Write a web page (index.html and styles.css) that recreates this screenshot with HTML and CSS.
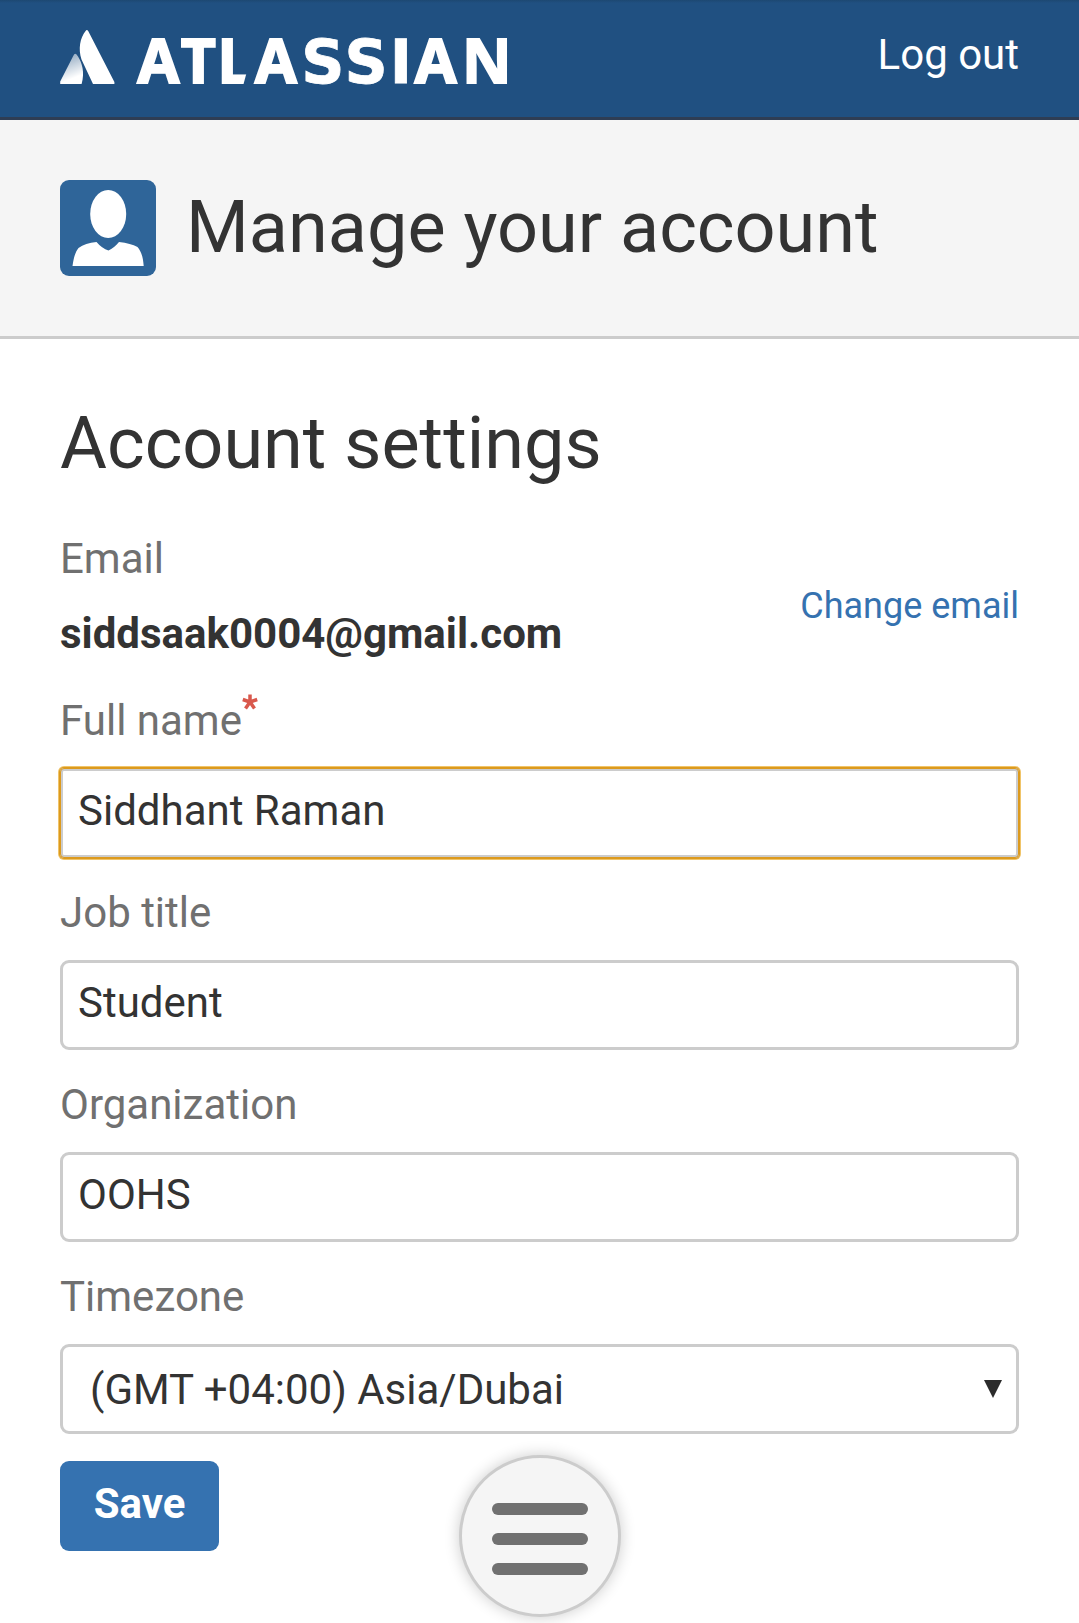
FILE: index.html
```html
<!DOCTYPE html>
<html lang="en">
<head>
<meta charset="utf-8">
<title>Manage your account</title>
<link rel="stylesheet" href="styles.css">
</head>
<body>
<header class="topbar">
  <svg class="logo" width="460" height="117" viewBox="60 0 460 117" aria-label="Atlassian">
    <defs>
      <linearGradient id="peak" x1="0.35" y1="0" x2="0.65" y2="1">
        <stop offset="0" stop-color="#fff" stop-opacity=".5"/>
        <stop offset="0.8" stop-color="#fff"/>
      </linearGradient>
    </defs>
    <path fill="url(#peak)" d="M60.200 84 V81.500 L73.200 56 Q75.300 51.500 78 56.500 C82 63 85 72 81.600 84 Z"/>
    <path fill="#fff" d="M93 84 L81.500 59.500 C78 49 80 38 85.600 31 Q86.800 29 88.200 31 L114.400 82 V84 Z"/>
    <text class="wordmark" y="83.200"><tspan x="137.200">A</tspan><tspan x="180.800">T</tspan><tspan x="217.500">L</tspan><tspan x="254.800">A</tspan><tspan class="wide" x="301.300">S</tspan><tspan class="wide" x="344.600">S</tspan><tspan class="wide" x="389.800">I</tspan><tspan x="414.600">A</tspan><tspan x="462">N</tspan></text>
    <path class="foot" d="M246.800 72 H252 V86 H243 Z"/>
  </svg>
  <a class="logout">Log out</a>
</header>
<section class="page-header">
  <svg class="avatar" width="96" height="96" viewBox="0 0 96 96">
    <rect width="96" height="96" rx="9" fill="#2f6599"/>
    <ellipse cx="48.200" cy="34" rx="18" ry="24" fill="#fff"/>
    <path fill="#fff" d="M12.500 86 C14 76 15.500 72 18.500 68 C23 64.500 29 63 36.500 62 Q42 68.500 48.500 70.500 Q54 68 59 62 C67 63 73 64.500 77.500 67 C81.500 72 83 77 83.700 86 Z"/>
  </svg>
  <h1>Manage your account</h1>
</section>
<main class="content">
  <h2>Account settings</h2>
  <div class="email-row">
    <div>
      <div class="label">Email</div>
      <div class="email">siddsaak0004@gmail.com</div>
    </div>
    <a class="change">Change email</a>
  </div>
  <div class="field">
    <label class="label" for="name">Full name<svg class="required" width="16" height="16" viewBox="0 0 16 16"><path d="M8 8 V0.500 M8 8 L0.800 5.500 M8 8 L15.200 5.500 M8 8 L3.500 14.500 M8 8 L12.500 14.500"/></svg></label>
    <input class="control focused" id="name" type="text" value="Siddhant Raman">
  </div>
  <div class="field">
    <label class="label" for="job">Job title</label>
    <input class="control" id="job" type="text" value="Student">
  </div>
  <div class="field">
    <label class="label" for="org">Organization</label>
    <input class="control" id="org" type="text" value="OOHS">
  </div>
  <div class="field">
    <label class="label" for="tz">Timezone</label>
    <div class="select">
      <select class="control" id="tz"><option>(GMT +04:00) Asia/Dubai</option></select>
      <svg class="arrow" width="18" height="18" viewBox="0 0 18 18"><path fill="#2b2b2b" d="M0 0 H18 L9 18 Z"/></svg>
    </div>
  </div>
  <button class="save" type="button">Save</button>
</main>
<button class="menu" type="button" aria-label="Menu"><span></span><span></span><span></span></button>
</body>
</html>
```
FILE: styles.css
```css
* { box-sizing: border-box; }
body {
  margin: 0;
  position: relative;
  height: 1623px;
  overflow: hidden;
  background: #fff;
  color: #333;
  font-family: Roboto, sans-serif;
  font-size: 42px;
}
h1, h2 { margin: 0; font-size: 72px; font-weight: 400; }

.topbar {
  display: flex;
  justify-content: space-between;
  align-items: flex-start;
  height: 120px;
  padding: 0 60px;
  background: linear-gradient(#1d4872, #205081 3px);
  border-bottom: 3px solid #2e3d54;
}
.logo { display: block; }
.wordmark {
  fill: #fff;
  stroke: #fff;
  stroke-width: 1.8px;
  font: 700 61px "Noto Sans", sans-serif;
}
.wide { font-family: "DejaVu Sans", sans-serif; font-size: 60px; stroke-width: .8px; }
.foot { fill: #205081; }
.logout { margin-top: 26px; color: #fff; line-height: 58px; }

.page-header {
  display: flex;
  gap: 30px;
  height: 219px;
  padding: 60px 60px 0;
  background: #f5f5f5;
  border-bottom: 3px solid #ccc;
}
.avatar { flex: none; }
h1 { line-height: 95px; }

.content { padding: 60px 60px 0; }
h2 { line-height: 90px; }

.email-row {
  display: flex;
  justify-content: space-between;
  height: 177px;
  padding-top: 40px;
}
.label { display: flex; color: #707070; line-height: 60px; }
.email { margin-top: 15px; line-height: 60px; font-weight: 700; }
.change { margin-top: 47px; color: #3572b0; font-size: 36px; line-height: 60px; }

.field { height: 192px; padding-top: 25px; }
.required { margin: 3px 0 0; fill: none; stroke: #d9584c; stroke-width: 3.5px; }
.control {
  display: block;
  width: 100%;
  height: 90px;
  margin-top: 17px;
  padding: 0 15px 5px;
  border: 3px solid #ccc;
  border-radius: 9px;
  outline: none;
  background: #fff;
  color: #333;
  font: inherit;
}
.focused {
  border-radius: 4px;
  box-shadow: 0 0 0 1px #dc9a1e, 0 0 0 2px #f0c469;
  outline: 1px solid #dc9a1e;
  outline-offset: -1px;
}
.select { position: relative; }
select.control { appearance: none; padding: 0 27px; }
.arrow { position: absolute; right: 17px; top: 36px; }

.save {
  display: block;
  width: 159px;
  height: 90px;
  margin-top: 27px;
  padding: 0 0 5px;
  border: 0;
  border-radius: 9px;
  background: #3572b0;
  color: #fff;
  font: 700 42px Roboto, sans-serif;
}
.menu {
  position: absolute;
  left: 459px;
  bottom: 6px;
  display: flex;
  flex-direction: column;
  align-items: center;
  gap: 18px;
  width: 162px;
  height: 162px;
  padding: 45px 0 0;
  border: 3px solid #ccc;
  border-radius: 50%;
  background: #f5f5f5;
  box-shadow: 0 0 15px rgba(0, 0, 0, .2);
}
.menu span { width: 96px; height: 12px; border-radius: 6px; background: #707070; }
```
